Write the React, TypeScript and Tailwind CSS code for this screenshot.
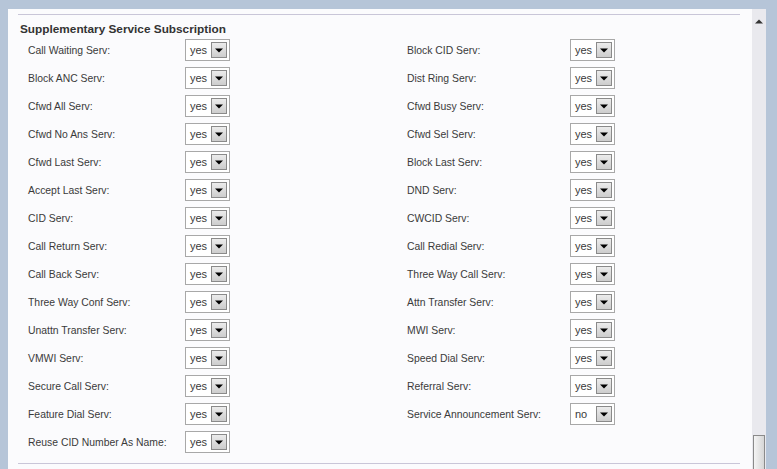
import React from "react";

const left: [string, string][] = [
  ["Call Waiting Serv:", "yes"],
  ["Block ANC Serv:", "yes"],
  ["Cfwd All Serv:", "yes"],
  ["Cfwd No Ans Serv:", "yes"],
  ["Cfwd Last Serv:", "yes"],
  ["Accept Last Serv:", "yes"],
  ["CID Serv:", "yes"],
  ["Call Return Serv:", "yes"],
  ["Call Back Serv:", "yes"],
  ["Three Way Conf Serv:", "yes"],
  ["Unattn Transfer Serv:", "yes"],
  ["VMWI Serv:", "yes"],
  ["Secure Call Serv:", "yes"],
  ["Feature Dial Serv:", "yes"],
  ["Reuse CID Number As Name:", "yes"],
];

const right: [string, string][] = [
  ["Block CID Serv:", "yes"],
  ["Dist Ring Serv:", "yes"],
  ["Cfwd Busy Serv:", "yes"],
  ["Cfwd Sel Serv:", "yes"],
  ["Block Last Serv:", "yes"],
  ["DND Serv:", "yes"],
  ["CWCID Serv:", "yes"],
  ["Call Redial Serv:", "yes"],
  ["Three Way Call Serv:", "yes"],
  ["Attn Transfer Serv:", "yes"],
  ["MWI Serv:", "yes"],
  ["Speed Dial Serv:", "yes"],
  ["Referral Serv:", "yes"],
  ["Service Announcement Serv:", "no"],
];

function Select({ value }: { value: string }) {
  return (
    <div className="w-[45px] h-[22px] border border-[#a8a8a8] bg-white flex items-center pl-[4px] pr-[2px] justify-between">
      <span className="text-[11px] text-[#3a3a3a] leading-none">{value}</span>
      <div className="w-[16px] h-[16px] border border-[#8a8a8a] bg-gradient-to-b from-[#ececec] to-[#cdcdcd] flex items-center justify-center">
        <svg width="8" height="5" viewBox="0 0 8 5">
          <polygon points="0,0.5 8,0.5 4,4.5" fill="#000" />
        </svg>
      </div>
    </div>
  );
}

export default function App() {
  return (
    <div
      className="w-[777px] h-[469px] bg-[#b6c5d8] flex overflow-hidden"
      style={{ fontFamily: '"Liberation Sans", Arial, sans-serif' }}
    >
      <div className="ml-[8px] mt-[9px] w-[744px] h-[460px] bg-[#fbfbfd] pl-[10px] pr-[12px] pt-[5px]">
        <div className="border-t border-[#c9c6d8] border-b pb-[7px]">
          <div className="pl-[2px] pt-[7px] text-[11.8px] font-bold text-[#333] leading-[14px]">
            Supplementary Service Subscription
          </div>
          <div className="flex pl-[10px]">
            <div className="flex flex-col">
              {left.map(([l, v]) => (
                <div key={l} className="h-[28px] flex items-center">
                  <div className="w-[157px] pt-[2px] text-[10.4px] text-[#3a3a3a]">{l}</div>
                  <Select value={v} />
                </div>
              ))}
            </div>
            <div className="flex flex-col ml-[177px]">
              {right.map(([l, v]) => (
                <div key={l} className="h-[28px] flex items-center">
                  <div className="w-[163px] pt-[2px] text-[10.4px] text-[#3a3a3a]">{l}</div>
                  <Select value={v} />
                </div>
              ))}
            </div>
          </div>
        </div>
      </div>
      <div className="mt-[9px] w-[14px] h-[460px] bg-[#e9e9ee] flex flex-col justify-between">
        <div className="h-[16px] flex items-end justify-center pb-[1px]">
          <svg width="8" height="5" viewBox="0 0 8 5">
            <polygon points="0,4.5 8,4.5 4,0.5" fill="#333" />
          </svg>
        </div>
        <div className="h-[34px] mx-[1px] border border-[#8a8a8a] border-b-0 bg-gradient-to-r from-[#f4f4f4] to-[#d6d6d6]" />
      </div>
    </div>
  );
}
